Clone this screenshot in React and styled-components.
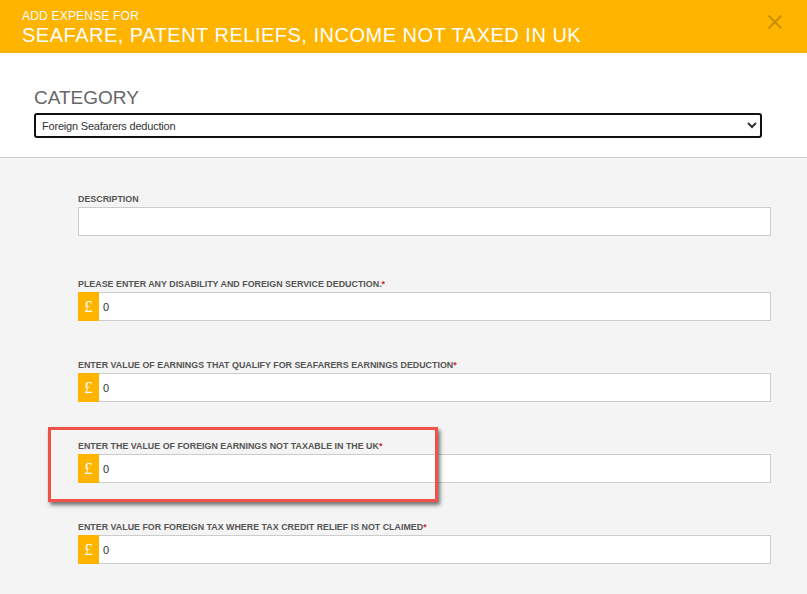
import React, { useState } from "react";
import styled, { createGlobalStyle } from "styled-components";

const GlobalStyle = createGlobalStyle`
  body {
    margin: 0;
    background: #f4f4f4;
    font-family: "Liberation Sans", Arial, sans-serif;
  }
`;

const Modal = styled.div`
  width: 807px;
  min-height: 594px;
  background: #f4f4f4;
`;

const Header = styled.div`
  position: relative;
  height: 53px;
  box-sizing: border-box;
  padding: 9px 22px 0;
  background: #ffb400;
  color: #fff;
`;

const SubTitle = styled.div`
  font-size: 12px;
  line-height: 14px;
  letter-spacing: 0.2px;
`;

const Title = styled.div`
  font-size: 20px;
  line-height: 24px;
  letter-spacing: 0.5px;
  margin-top: 0;
`;

const Close = styled.button`
  position: absolute;
  top: 14px;
  right: 24px;
  width: 16px;
  height: 16px;
  padding: 0;
  border: 0;
  background: transparent;
  cursor: pointer;
`;

const CategorySection = styled.div`
  background: #fff;
  height: 105px;
  box-sizing: border-box;
  padding: 34px 45px 0 34px;
  border-bottom: 1px solid #cfcfcf;
`;

const CategoryLabel = styled.div`
  font-size: 19px;
  line-height: 22px;
  color: #666;
`;

const Select = styled.select`
  display: block;
  width: 100%;
  height: 25px;
  margin-top: 4px;
  border: 2px solid #111;
  border-radius: 3px;
  background: #fff;
  font-family: "Liberation Sans", Arial, sans-serif;
  font-size: 11px;
  letter-spacing: -0.2px;
  color: #333;
  padding: 0 2px;
`;

const Form = styled.div`
  display: flex;
  flex-direction: column;
  padding: 36px 36px 30px 78px;
`;

const Field = styled.div`
  position: relative;
  display: flex;
  flex-direction: column;
  gap: 2px;
  margin-bottom: ${(p) => p.$space}px;
`;

const Label = styled.label`
  font-size: 8.9px;
  line-height: 11px;
  font-weight: bold;
  color: #555;
  text-transform: uppercase;
`;

const Req = styled.span`
  color: #d9262b;
`;

const InputRow = styled.div`
  display: flex;
  height: 29px;
`;

const Pound = styled.span`
  flex: 0 0 21px;
  display: flex;
  align-items: center;
  justify-content: center;
  background: #ffb400;
  color: #fff;
  font-family: "Liberation Serif", "DejaVu Serif", serif;
  font-size: 17px;
`;

const Input = styled.input`
  flex: 1;
  min-width: 0;
  box-sizing: border-box;
  height: 29px;
  margin: 0;
  border: 1px solid #cccccc;
  border-left-width: ${(p) => (p.$addon ? 0 : 1)}px;
  background: #fff;
  padding: 0 4px;
  font-family: "Liberation Sans", Arial, sans-serif;
  font-size: 11px;
  color: #333;
  outline: none;
`;

const Highlight = styled.div`
  position: absolute;
  left: -30px;
  top: -14px;
  width: 390px;
  height: 75px;
  box-sizing: border-box;
  border: 3px solid #f0524a;
  box-shadow: 2px 3px 4px rgba(0, 0, 0, 0.55);
  pointer-events: none;
`;

const fields = [
  { label: "Please enter any disability and foreign service deduction." },
  { label: "Enter value of earnings that qualify for seafarers earnings deduction" },
  { label: "Enter the value of foreign earnings not taxable in the UK", highlight: true },
  { label: "Enter value for foreign tax where tax credit relief is not claimed" },
];

export default function App() {
  const [values, setValues] = useState(fields.map(() => "0"));

  return (
    <Modal>
      <GlobalStyle />
      <Header>
        <SubTitle>ADD EXPENSE FOR</SubTitle>
        <Title>SEAFARE, PATENT RELIEFS, INCOME NOT TAXED IN UK</Title>
        <Close aria-label="Close">
          <svg width="16" height="16" viewBox="0 0 16 16">
            <path d="M1.5 1.5 L14.5 14.5 M14.5 1.5 L1.5 14.5" stroke="#c98f00" strokeWidth="2" />
          </svg>
        </Close>
      </Header>
      <CategorySection>
        <CategoryLabel>CATEGORY</CategoryLabel>
        <Select defaultValue="seafarers">
          <option value="seafarers">Foreign Seafarers deduction</option>
        </Select>
      </CategorySection>
      <Form>
        <Field $space={43}>
          <Label>Description</Label>
          <InputRow>
            <Input />
          </InputRow>
        </Field>
        {fields.map((f, i) => (
          <Field key={i} $space={39}>
            {f.highlight && <Highlight />}
            <Label>
              {f.label}
              <Req>*</Req>
            </Label>
            <InputRow>
              <Pound>£</Pound>
              <Input
                $addon
                value={values[i]}
                onChange={(e) =>
                  setValues(values.map((v, j) => (j === i ? e.target.value : v)))
                }
              />
            </InputRow>
          </Field>
        ))}
      </Form>
    </Modal>
  );
}
